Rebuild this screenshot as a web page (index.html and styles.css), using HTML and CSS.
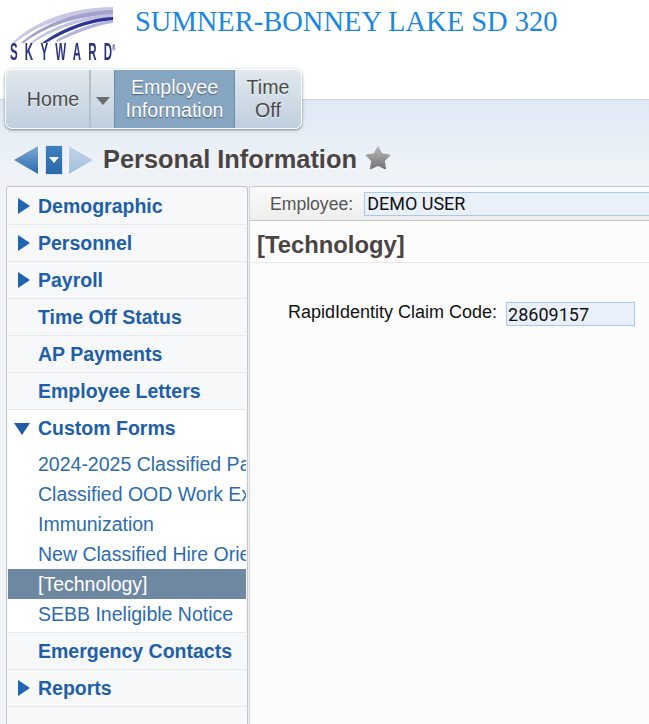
FILE: index.html
```html
<!DOCTYPE html>
<html lang="en">
<head>
<meta charset="utf-8">
<title>Personal Information</title>
<link rel="stylesheet" href="styles.css">
</head>
<body>
<header class="top">
  <div class="logo">
    <svg class="logo-arc" width="108" height="36" viewBox="0 0 108 36" aria-hidden="true">
      <path d="M103 0C62 0 24 14 2 36H5C26 18 64 5 103 5Z" fill="#c9c7e3"/>
      <path d="M103 3C66 4 32 17 11 36H14C34 20 68 8 103 8Z" fill="#a3a1cd"/>
      <path d="M103 7C72 8 40 20 20 36H23C42 23 74 11 103 11Z" fill="#c3c2e0"/>
      <path d="M103 10C78 11 50 22 32 36H36C54 25 80 14 103 13.500Z" fill="#2c3792"/>
      <path d="M103 13C84 15 62 24 46 33L47 35C64 27 86 18 103 16Z" fill="#b3b4d8"/>
    </svg>
    <div class="logo-word">SKYWAR<span class="logo-last">D</span><sup>®</sup></div>
  </div>
  <h1 class="district">SUMNER-BONNEY LAKE SD 320</h1>
</header>
<nav class="tabs">
  <a class="tab tab-home">Home</a>
  <a class="tab tab-drop"><span class="drop-arrow"></span></a>
  <a class="tab tab-active">Employee<br>Information</a>
  <a class="tab tab-time">Time<br>Off</a>
</nav>
<main class="page">
  <div class="title-row">
    <div class="arrows">
      <svg class="arrow" width="26" height="30" viewBox="0 0 26 30" aria-hidden="true"><defs><linearGradient id="a1" x1="0" y1="0" x2="0" y2="1"><stop offset="0" stop-color="#7fa8d2"/><stop offset="1" stop-color="#2a6cb0"/></linearGradient></defs><path d="M24 1V29L0 15Z" fill="url(#a1)"/></svg>
      <span class="arrow-mid"><span class="arrow-mid-tri"></span></span>
      <svg class="arrow" width="26" height="30" viewBox="0 0 26 30" aria-hidden="true"><defs><linearGradient id="a2" x1="0" y1="0" x2="0" y2="1"><stop offset="0" stop-color="#c3d5e9"/><stop offset="1" stop-color="#a3c0dd"/></linearGradient></defs><path d="M1 1V29L25 15Z" fill="url(#a2)"/></svg>
    </div>
    <h2 class="page-title">Personal Information</h2>
    <svg class="star" width="26" height="26" viewBox="0 0 26 26" aria-hidden="true"><defs><linearGradient id="s1" x1="0" y1="0" x2="0" y2="1"><stop offset="0" stop-color="#b8b8b8"/><stop offset="1" stop-color="#747474"/></linearGradient></defs><path d="M13 2L16.800 9 24.500 10.200 19 15.800 20.300 23.500 13 20 5.700 23.500 7 15.800 1.500 10.200 9.200 9Z" fill="url(#s1)" stroke="url(#s1)" stroke-width="1.500" stroke-linejoin="round"/></svg>
  </div>
  <div class="columns">
    <aside class="side">
      <a class="side-row"><span class="tri"></span>Demographic</a>
      <a class="side-row"><span class="tri"></span>Personnel</a>
      <a class="side-row"><span class="tri"></span>Payroll</a>
      <a class="side-row">Time Off Status</a>
      <a class="side-row">AP Payments</a>
      <a class="side-row">Employee Letters</a>
      <div class="side-group">
        <a class="side-row side-row-open"><span class="tri-down"></span>Custom Forms</a>
        <a class="side-sub">2024-2025 Classified Pay Rates</a>
        <a class="side-sub">Classified OOD Work Experience</a>
        <a class="side-sub">Immunization</a>
        <a class="side-sub">New Classified Hire Orientation</a>
        <a class="side-sub side-sub-active">[Technology]</a>
        <a class="side-sub">SEBB Ineligible Notice</a>
      </div>
      <a class="side-row">Emergency Contacts</a>
      <a class="side-row"><span class="tri"></span>Reports</a>
    </aside>
    <section class="content">
      <div class="emp-bar">
        <span class="emp-label">Employee:</span>
        <span class="emp-value">DEMO USER</span>
      </div>
      <h3 class="form-title">[Technology]</h3>
      <div class="form-row">
        <span class="field-label">RapidIdentity Claim Code:</span>
        <span class="field-value">28609157</span>
      </div>
    </section>
  </div>
</main>
</body>
</html>
```
FILE: styles.css
```css
html, body {
  margin: 0;
  padding: 0;
  height: 100%;
  overflow: hidden;
}
body {
  width: 649px;
  height: 724px;
  display: flex;
  flex-direction: column;
  background: #fff;
  font-family: "Liberation Sans", Arial, sans-serif;
}
.top {
  height: 69px;
  flex: none;
  display: flex;
  align-items: flex-start;
  background: #fff;
}
.logo {
  width: 135px;
  flex: none;
  padding: 7px 0 0 10px;
  box-sizing: border-box;
  height: 69px;
}
.logo-arc {
  display: block;
  filter: blur(0.5px);
}
.logo-word {
  margin-top: -2px;
  font: bold 23px/22px "Liberation Sans", Arial, sans-serif;
  letter-spacing: 14.400px;
  color: #2a3580;
  white-space: nowrap;
  transform: scaleX(0.5);
  transform-origin: left top;
  filter: blur(0.4px);
}
.logo-last {
  letter-spacing: 0;
}
.logo-word sup {
  font-size: 9px;
  line-height: 0;
  letter-spacing: 0;
  vertical-align: 9px;
}
.district {
  margin: 5px 0 0;
  font: normal 28.500px/34px "Liberation Serif", "Times New Roman", serif;
  color: #1a87e0;
  white-space: nowrap;
}
.tabs {
  position: relative;
  z-index: 1;
  flex: none;
  align-self: flex-start;
  display: flex;
  margin: 0 0 -30px 5px;
  height: 60px;
  box-sizing: border-box;
  border: 1px solid #fff;
  border-radius: 7px;
  overflow: hidden;
  background: linear-gradient(#e2e8ee, #bfcfde);
  box-shadow: 0 1px 3px rgba(60, 70, 85, .65);
}
.tab {
  display: flex;
  align-items: center;
  justify-content: center;
  text-align: center;
  font-size: 19.600px;
  line-height: 23px;
  color: #4a4a4a;
  text-shadow: 0 1px 0 rgba(255, 255, 255, .8);
}
.tab-home {
  width: 85px;
  padding-left: 11px;
  box-sizing: border-box;
  border-right: 2px solid #b4bfc9;
}
.tab-drop {
  width: 23px;
}
.drop-arrow {
  width: 0;
  height: 0;
  margin-top: 3px;
  border-style: solid;
  border-width: 8px 7px 0;
  border-color: #6c6c6c transparent transparent;
}
.tab-active {
  width: 121px;
  box-sizing: border-box;
  background: #86a5c1;
  border: 1px solid #6f8ba6;
  border-width: 0 1px;
  color: #fff;
  text-shadow: 0 1px 1px rgba(50, 60, 80, .75);
}
.tab-time {
  width: 66px;
}
.page {
  flex: 1;
  min-height: 0;
  display: flex;
  flex-direction: column;
  border-top: 1px solid #c9d3dd;
  background: linear-gradient(#dfe9f5, #eff3f8 70px, #f1f4f8);
}
.title-row {
  height: 86px;
  box-sizing: border-box;
  padding-top: 43px;
  flex: none;
  display: flex;
  align-items: flex-start;
}
.arrows {
  display: flex;
  align-items: center;
  margin: 2px 0 0 14px;
  height: 30px;
  gap: 5px;
}
.arrow {
  display: block;
  filter: drop-shadow(0 0 1px #fff);
}
.arrow-mid {
  width: 18px;
  height: 30px;
  display: flex;
  align-items: center;
  justify-content: center;
  box-sizing: border-box;
  border: 1px solid #d9e4f0;
  background: linear-gradient(#3f7fbe, #2a69ab);
}
.arrow-mid-tri {
  width: 0;
  height: 0;
  border-style: solid;
  border-width: 6px 5px 0;
  border-color: #fff transparent transparent;
}
.page-title {
  margin: 0 0 0 9px;
  font: bold 25.400px/32px "Liberation Sans", Arial, sans-serif;
  color: #4a4444;
  text-shadow: 0 1px 1px #fff;
  white-space: nowrap;
}
.star {
  margin: 2px 0 0 8px;
}
.columns {
  flex: 1;
  min-height: 0;
  display: flex;
  padding-left: 6px;
}
.side {
  width: 242px;
  flex: none;
  box-sizing: border-box;
  border: 1px solid #c6c6c6;
  border-bottom: 0;
  border-radius: 3px 3px 0 0;
  padding: 1px 1px 0;
  background: #f7f8fa;
  overflow: hidden;
}
.side-row {
  display: flex;
  align-items: center;
  height: 37px;
  box-sizing: border-box;
  border-bottom: 1px solid #e5e8eb;
  padding: 0 0 0 30px;
  position: relative;
  font-size: 19.500px;
  font-weight: bold;
  color: #1e60a8;
  white-space: nowrap;
}
.tri {
  position: absolute;
  left: 10px;
  top: 10px;
  width: 0;
  height: 0;
  border-style: solid;
  border-width: 8px 0 8px 12px;
  border-color: transparent transparent transparent #1f64ae;
}
.tri-down {
  position: absolute;
  left: 6px;
  top: 13px;
  width: 0;
  height: 0;
  border-style: solid;
  border-width: 12px 8px 0;
  border-color: #1f5ba3 transparent transparent;
}
.side-group {
  background: #fff;
  padding-bottom: 3px;
  border-bottom: 1px solid #e5e8eb;
}
.side-row-open {
  border-bottom: 0;
  height: 39px;
  padding: 0 0 3px 30px;
}
.side-sub {
  display: block;
  height: 30px;
  padding-left: 30px;
  font-size: 19.500px;
  line-height: 30px;
  color: #2b6cb0;
  white-space: nowrap;
  overflow: hidden;
}
.side-sub-active {
  background: #6f88a2;
  color: #fff;
}
.content {
  flex: 1;
  min-width: 0;
  margin-left: 1px;
  border-left: 1px solid #d2d2d2;
  background: #fcfcfc;
}
.emp-bar {
  height: 35px;
  box-sizing: border-box;
  display: flex;
  align-items: center;
  border-top: 1px solid #c6c6c6;
  border-bottom: 1px solid #c6c6c6;
  border-radius: 3px 0 0 0;
  background: linear-gradient(#fafafa, #eeeeee);
  padding-left: 20px;
}
.emp-label {
  font-size: 17.600px;
  padding-top: 2px;
  color: #555;
}
.emp-value {
  flex: 1;
  margin-left: 11px;
  height: 24px;
  box-sizing: border-box;
  border: 1px solid #a9c9ea;
  border-right: 0;
  background: #e9f0fa;
  font-family: Roboto, "Liberation Sans", sans-serif;
  font-size: 18px;
  line-height: 21px;
  padding-left: 2px;
  color: #111;
}
.form-title {
  margin: 0;
  height: 42px;
  box-sizing: border-box;
  padding-left: 7px;
  border-bottom: 1px solid #e8e8e8;
  font: bold 23.800px/48px "Liberation Sans", Arial, sans-serif;
  color: #4a4444;
}
.form-row {
  display: flex;
  align-items: flex-start;
  margin-top: 38px;
  padding-left: 38px;
}
.field-label {
  font-size: 18px;
  line-height: 22px;
  color: #111;
}
.field-value {
  margin-left: 9px;
  margin-top: 1px;
  width: 129px;
  height: 24px;
  box-sizing: border-box;
  border: 1px solid #a9c9ea;
  background: #e9f0fa;
  font-family: Roboto, "Liberation Sans", sans-serif;
  font-size: 18px;
  line-height: 24px;
  padding-left: 1px;
  color: #111;
}
```
